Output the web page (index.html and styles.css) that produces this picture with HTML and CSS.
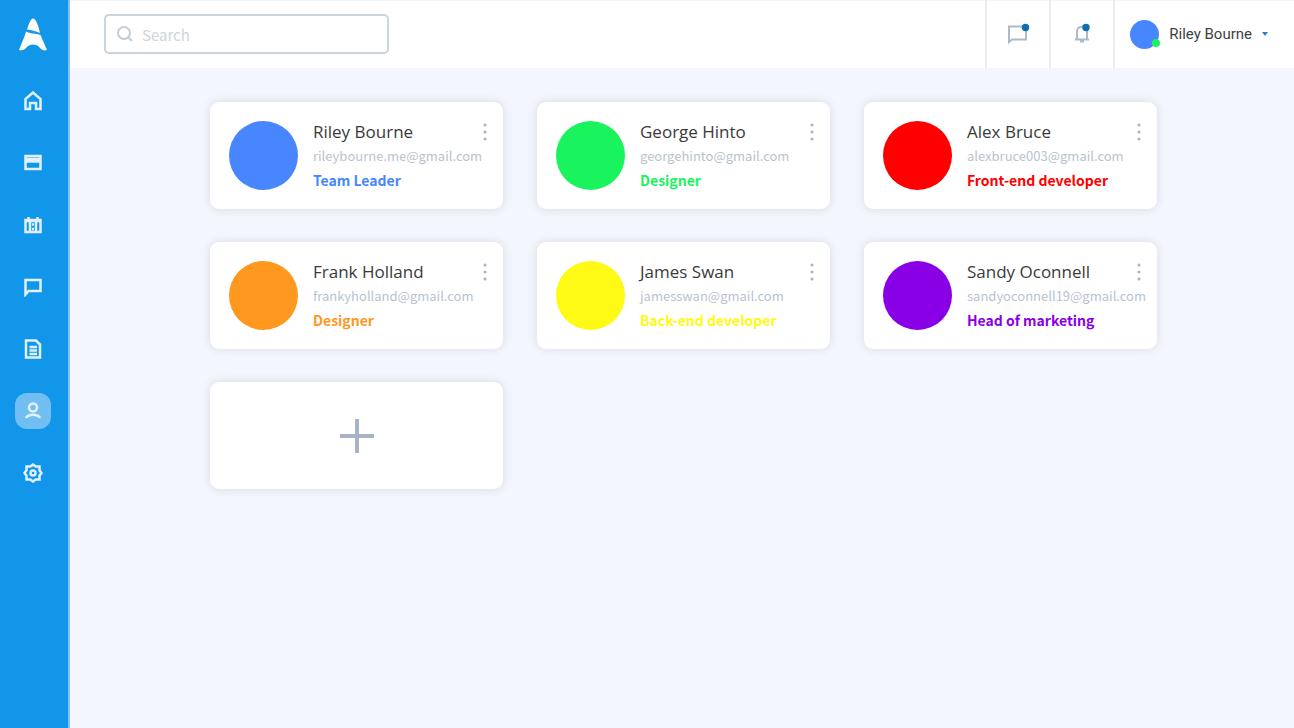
FILE: index.html
```html
<!DOCTYPE html>
<html lang="en">
<head>
<meta charset="utf-8">
<meta name="viewport" content="width=device-width, initial-scale=1">
<title>Team</title>
<link rel="stylesheet" href="styles.css">
</head>
<body>
<div class="app">
  <aside class="sidebar">
    <a class="logo" href="#" aria-label="Home page">
      <svg width="30" height="34" viewBox="0 0 30 34" fill="#fff"><path d="M9 11.500C11 5 13 0.500 15 0.500C18 0.500 20.500 8 22 15C18 13 13 12 9 11.500Z"/><path d="M8 13.500C12 16 18 15 22.500 17C25 23 27 27 29 32C26 33 24 32 22 30C18 25 11 26 8 30C6 32 4 32.500 1 32C3 26 6 21 8 13.500Z"/></svg>
    </a>
    <nav class="nav" aria-label="Main">
      <a class="nav-link" href="#" aria-label="Dashboard"><svg class="icon" viewBox="0 0 20 20"><path d="M2.500 18V8L10 1.500L17.500 8V18H13V12H7V18Z"/></svg></a>
      <a class="nav-link" href="#" aria-label="Billing"><svg class="icon" viewBox="0 0 20 20"><path d="M2.500 3H17.500V16H2.500ZM2 8.500H18M2 6H18"/></svg></a>
      <a class="nav-link" href="#" aria-label="Calendar"><svg class="icon" viewBox="0 0 20 20"><path d="M2.500 5H17.500V17H2.500ZM2 6H18M5.500 2V6M14.500 2V6M7 7V17M13 7V17M9 9.500H11M9 14H11"/></svg></a>
      <a class="nav-link" href="#" aria-label="Messages"><svg class="icon" viewBox="0 0 20 20"><path d="M2.500 17.500V3H17.500V14H5.500Z"/></svg></a>
      <a class="nav-link" href="#" aria-label="Documents"><svg class="icon" viewBox="0 0 20 20"><path d="M3 1.500H13L17 5.500V18.500H3ZM6.500 8H14M6.500 11.500H14M6.500 15H14"/></svg></a>
      <a class="nav-link active" href="#" aria-label="Team" aria-current="page"><svg class="icon" viewBox="0 0 20 20"><circle cx="10" cy="6.500" r="4"/><path d="M3 17C5 12.500 15 12.500 17 17"/></svg></a>
      <a class="nav-link" href="#" aria-label="Settings"><svg class="icon" viewBox="0 0 20 20"><path d="M10 1.500L12.700 3.500H16.500V7.300L18.500 10L16.500 12.700V16.500H12.700L10 18.500L7.300 16.500H3.500V12.700L1.500 10L3.500 7.300V3.500H7.300Z"/><circle cx="10" cy="10" r="2.500"/></svg></a>
    </nav>
  </aside>
  <div class="page">
    <header class="topbar">
      <label class="search">
        <svg width="18" height="18" viewBox="0 0 18 18" fill="none" stroke="#c3ccd7" stroke-width="2"><circle cx="8" cy="8" r="6"/><path d="M12.500 12.500L16 16"/></svg>
        <input class="search-input" type="text" placeholder="Search" aria-label="Search">
      </label>
      <div class="tools">
        <button class="tool" type="button" aria-label="Messages"><svg width="24" height="24" viewBox="0 0 24 24" fill="none" stroke="#aebac8" stroke-width="2"><path d="M3 20V4.500H20V17.500H6Z"/><circle cx="19.500" cy="5.500" r="3.700" fill="#0b6fb4" stroke="none"/></svg></button>
        <button class="tool" type="button" aria-label="Notifications"><svg width="24" height="24" viewBox="0 0 24 24" fill="none" stroke="#aebac8" stroke-width="2"><path d="M5 17.500H19M7 17.500V9.500C7 3 17 3 17 9.500V17.500M10 19.500H14"/><circle cx="16" cy="5.500" r="3.700" fill="#0b6fb4" stroke="none"/></svg></button>
        <button class="account" type="button">
          <span class="account-avatar"><span class="online"></span></span>
          <span class="account-name">Riley Bourne</span>
          <svg width="6" height="4" viewBox="0 0 6 4"><path d="M0 0H6L3 4Z" fill="#2f80c6"/></svg>
        </button>
      </div>
    </header>
    <main class="team">
      <article class="card blue">
        <span class="avatar"></span>
        <div class="info">
          <div class="head"><h2 class="name">Riley Bourne</h2><button class="more" type="button" aria-label="More options"><svg width="4" height="18" viewBox="0 0 4 18"><circle cx="2" cy="2" r="1.500"/><circle cx="2" cy="9" r="1.500"/><circle cx="2" cy="16" r="1.500"/></svg></button></div>
          <p class="email">rileybourne.me@gmail.com</p>
          <p class="role">Team Leader</p>
        </div>
      </article>
      <article class="card green">
        <span class="avatar"></span>
        <div class="info">
          <div class="head"><h2 class="name">George Hinto</h2><button class="more" type="button" aria-label="More options"><svg width="4" height="18" viewBox="0 0 4 18"><circle cx="2" cy="2" r="1.500"/><circle cx="2" cy="9" r="1.500"/><circle cx="2" cy="16" r="1.500"/></svg></button></div>
          <p class="email">georgehinto@gmail.com</p>
          <p class="role">Designer</p>
        </div>
      </article>
      <article class="card red">
        <span class="avatar"></span>
        <div class="info">
          <div class="head"><h2 class="name">Alex Bruce</h2><button class="more" type="button" aria-label="More options"><svg width="4" height="18" viewBox="0 0 4 18"><circle cx="2" cy="2" r="1.500"/><circle cx="2" cy="9" r="1.500"/><circle cx="2" cy="16" r="1.500"/></svg></button></div>
          <p class="email">alexbruce003@gmail.com</p>
          <p class="role">Front-end developer</p>
        </div>
      </article>
      <article class="card orange">
        <span class="avatar"></span>
        <div class="info">
          <div class="head"><h2 class="name">Frank Holland</h2><button class="more" type="button" aria-label="More options"><svg width="4" height="18" viewBox="0 0 4 18"><circle cx="2" cy="2" r="1.500"/><circle cx="2" cy="9" r="1.500"/><circle cx="2" cy="16" r="1.500"/></svg></button></div>
          <p class="email">frankyholland@gmail.com</p>
          <p class="role">Designer</p>
        </div>
      </article>
      <article class="card yellow">
        <span class="avatar"></span>
        <div class="info">
          <div class="head"><h2 class="name">James Swan</h2><button class="more" type="button" aria-label="More options"><svg width="4" height="18" viewBox="0 0 4 18"><circle cx="2" cy="2" r="1.500"/><circle cx="2" cy="9" r="1.500"/><circle cx="2" cy="16" r="1.500"/></svg></button></div>
          <p class="email">jamesswan@gmail.com</p>
          <p class="role">Back-end developer</p>
        </div>
      </article>
      <article class="card purple">
        <span class="avatar"></span>
        <div class="info">
          <div class="head"><h2 class="name">Sandy Oconnell</h2><button class="more" type="button" aria-label="More options"><svg width="4" height="18" viewBox="0 0 4 18"><circle cx="2" cy="2" r="1.500"/><circle cx="2" cy="9" r="1.500"/><circle cx="2" cy="16" r="1.500"/></svg></button></div>
          <p class="email">sandyoconnell19@gmail.com</p>
          <p class="role">Head of marketing</p>
        </div>
      </article>
      <button class="card add" type="button" aria-label="Add member"><svg width="34" height="34" viewBox="0 0 34 34" stroke="#a5b3c4" stroke-width="4"><path d="M17 0V34M0 17H34"/></svg></button>
    </main>
  </div>
</div>
</body>
</html>
```
FILE: styles.css
```css
* { box-sizing: border-box; }
body { margin: 0; background: #f3f6fc; font-family: "Noto Sans CJK SC", "Noto Sans", sans-serif; }
button { border: 0; padding: 0; background: none; font: inherit; cursor: pointer; }
svg { display: block; flex: none; }

.app { display: flex; min-height: 100vh; }

.sidebar {
  flex: none;
  padding: 18px 17px 0 15px;
  background: #1296e9;
  border-right: 2px solid #8dbdf6;
}
.logo { display: flex; justify-content: center; height: 65px; }
.nav { display: flex; flex-direction: column; gap: 26px; }
.nav-link {
  display: flex;
  align-items: center;
  justify-content: center;
  width: 36px;
  height: 36px;
  border-radius: 12px;
}
.nav-link.active { background: #71bff2; }
.icon { width: 20px; height: 20px; fill: none; stroke: #e0f1fd; stroke-width: 2.5; }

.page { flex: 1; min-width: 0; }
.topbar {
  display: flex;
  align-items: center;
  justify-content: space-between;
  height: 68px;
  padding-left: 34px;
  background: #fff;
  box-shadow: inset 0 1px #f4f5f7;
}
.search {
  display: flex;
  align-items: center;
  gap: 8px;
  width: 285px;
  height: 40px;
  padding: 0 10px;
  border: 2px solid #ccd4df;
  border-radius: 5px;
}
.search-input {
  flex: 1;
  min-width: 0;
  border: 0;
  padding: 0;
  outline: 0;
  background: none;
  font-family: "Noto Sans CJK SC", "Noto Sans", sans-serif;
  font-size: 15px;
  color: #3d4652;
}
.search-input::placeholder { color: #ccd4df; opacity: 1; }

.tools { display: flex; align-self: stretch; }
.tool {
  display: flex;
  align-items: center;
  justify-content: center;
  width: 64px;
  border-left: 2px solid #ececee;
}
.account {
  display: flex;
  align-items: center;
  gap: 10px;
  padding: 0 26px 0 15px;
  border-left: 2px solid #ececee;
}
.account-avatar {
  position: relative;
  width: 29px;
  height: 29px;
  border-radius: 50%;
  background: #4786ff;
}
.online {
  position: absolute;
  right: -1px;
  bottom: 2px;
  width: 8px;
  height: 8px;
  border-radius: 50%;
  background: #19f45e;
}
.account-name { font-family: Roboto, sans-serif; font-size: 15px; line-height: 20px; color: #3f3f3f; }

.team {
  display: grid;
  grid-template-columns: repeat(3, minmax(0, 1fr));
  gap: 33px 34px;
  padding: 34px 137px 34px 140px;
}
.card {
  display: flex;
  align-items: center;
  gap: 15px;
  min-height: 107px;
  padding: 16px 16px 16px 19px;
  border-radius: 9px;
  background: #fff;
  box-shadow: 0 0 10px rgba(60, 70, 90, 0.15);
}
.add { justify-content: center; padding: 16px; }
.avatar { flex: none; width: 69px; height: 69px; border-radius: 50%; background: var(--tone); }
.info { flex: 1; min-width: 0; }
.head { display: flex; align-items: center; justify-content: space-between; }
.name { margin: 0; font-family: "Open Sans", sans-serif; font-size: 17px; font-weight: 400; line-height: 24px; color: #3a3a3a; white-space: nowrap; }
.more svg { fill: #a5b3c4; }
.email, .role { margin: 0; line-height: 24px; white-space: nowrap; }
.email { font-size: 13px; color: #b8c3d0; }
.role { font-size: 14px; color: var(--tone); font-weight: 700; }

.blue { --tone: #4786ff; }
.green { --tone: #19f45e; }
.red { --tone: #ff0000; }
.orange { --tone: #ff981f; }
.yellow { --tone: #fff916; }
.purple { --tone: #8a00e6; }
```
